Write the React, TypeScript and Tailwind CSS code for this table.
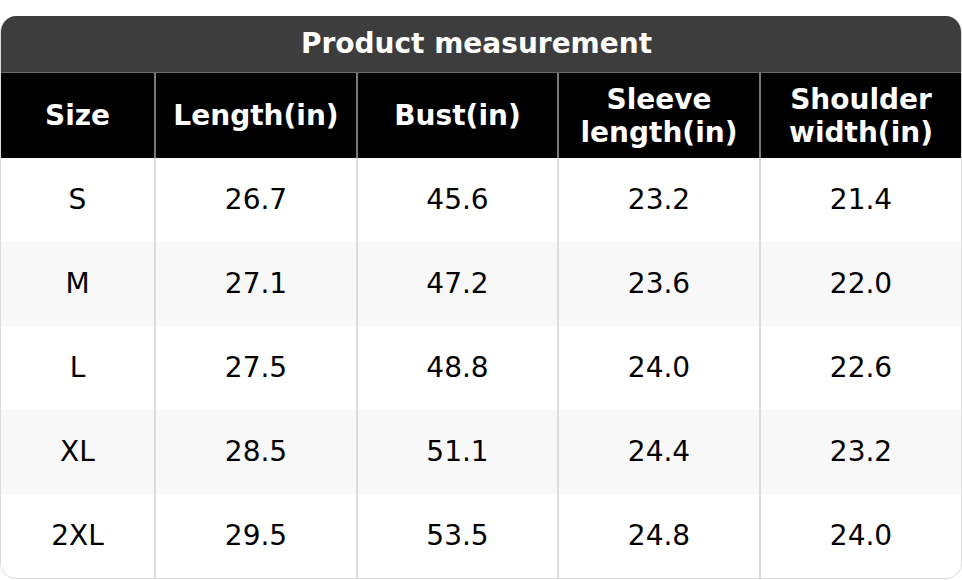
import React from "react";

const headers = ["Size", "Length(in)", "Bust(in)", "Sleeve\nlength(in)", "Shoulder\nwidth(in)"];
const rows = [
  ["S", "26.7", "45.6", "23.2", "21.4"],
  ["M", "27.1", "47.2", "23.6", "22.0"],
  ["L", "27.5", "48.8", "24.0", "22.6"],
  ["XL", "28.5", "51.1", "24.4", "23.2"],
  ["2XL", "29.5", "53.5", "24.8", "24.0"],
];

export default function App() {
  return (
    <div className="w-[962px] h-[580px] bg-white pt-[16px]" style={{ fontFamily: '"DejaVu Sans", sans-serif' }}>
      <div className="w-[962px] rounded-[16px] overflow-hidden border border-[#dcdcdc] border-t-0">
        <div className="h-[57px] bg-[#3d3d3d] flex items-center justify-center pr-[9px] text-white font-bold text-[28px] leading-none border-b border-[#6a6a6a]">
          Product measurement
        </div>
        <div className="grid grid-cols-[153px_202px_201px_202px_1fr] bg-black">
          {headers.map((h, i) => (
            <div
              key={i}
              className={`h-[85px] flex items-center justify-center text-center text-white font-bold text-[28px] leading-[33px] whitespace-pre-line ${i > 0 ? "border-l-2 border-[#7a7a7a]" : ""}`}
            >
              {h}
            </div>
          ))}
        </div>
        {rows.map((r, ri) => (
          <div key={ri} className={`grid grid-cols-[153px_202px_201px_202px_1fr] ${ri % 2 === 1 ? "bg-[#f8f8f8]" : "bg-white"}`}>
            {r.map((c, ci) => (
              <div
                key={ci}
                className={`h-[84px] flex items-center justify-center text-[28px] text-black ${ci > 0 ? "border-l-2 border-[#dcdcdc]" : ""}`}
              >
                {c}
              </div>
            ))}
          </div>
        ))}
      </div>
    </div>
  );
}
